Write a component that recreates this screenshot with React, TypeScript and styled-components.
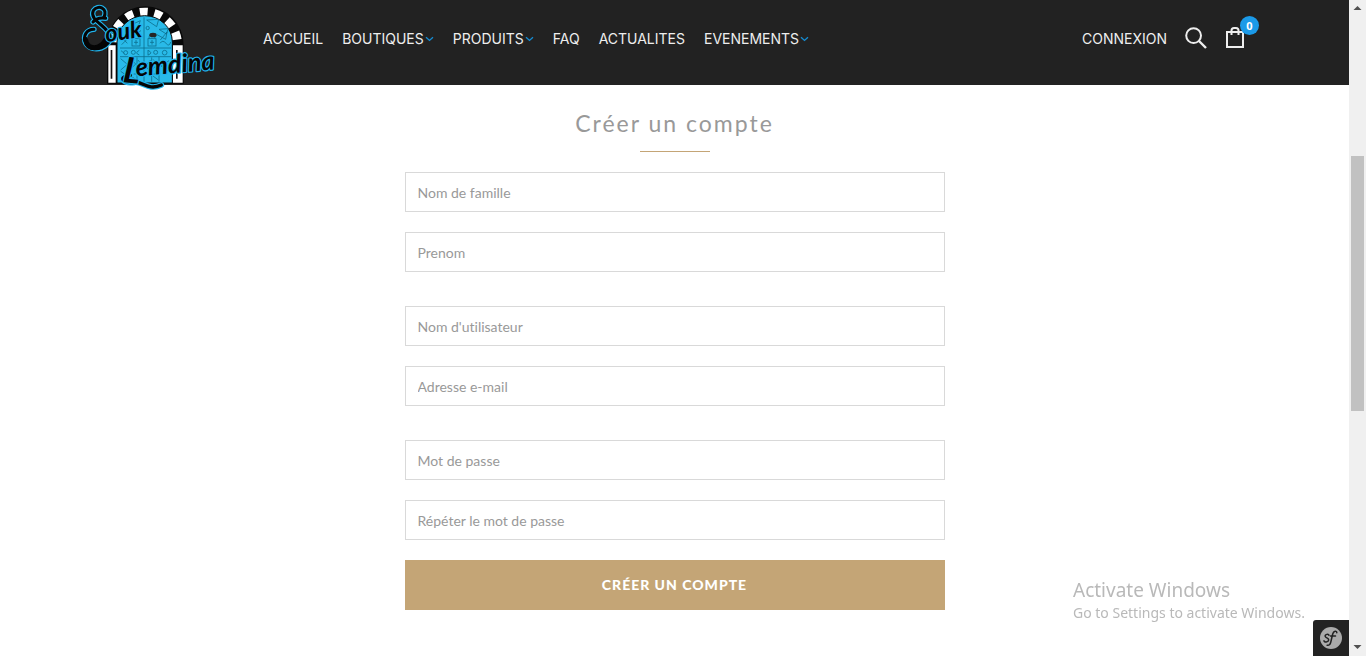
import React from 'react';
import styled, { createGlobalStyle } from 'styled-components';

const GlobalStyle = createGlobalStyle`
  *, *::before, *::after { box-sizing: border-box; }
  body { margin: 0; background: #fff; font-family: Lato, sans-serif; }
`;

const Page = styled.div`
  display: grid;
  grid-template-columns: minmax(0, 1fr) 17px;
  min-height: 100vh;
`;

const Header = styled.header`
  display: flex;
  align-items: center;
  height: 85px;
  padding: 0 90px 0 75px;
  background: #222;
`;

const LogoLink = styled.a`
  align-self: flex-start;
  flex: none;
  width: 150px;
  height: 85px;
  margin-right: 38px;
  svg { display: block; overflow: visible; }
`;

const Nav = styled.nav`
  display: flex;
  gap: 19px;
  padding-bottom: 8px;
`;

const NavLink = styled.a`
  display: flex;
  align-items: center;
  gap: 1px;
  color: #eee;
  font: 14px/20px Inter, sans-serif;
  text-decoration: none;
  white-space: nowrap;
`;

const Tools = styled.div`
  display: flex;
  align-items: flex-end;
  gap: 18px;
  margin-left: auto;
  padding-bottom: 10px;
`;

const IconButton = styled.button`
  position: relative;
  display: block;
  padding: 0;
  border: 0;
  background: none;
  color: #eee;
  svg { display: block; }
`;

const CartButton = styled(IconButton)`
  padding-right: 15px;
`;

const Badge = styled.span`
  position: absolute;
  top: -11px;
  right: 0;
  width: 19px;
  height: 19px;
  border-radius: 50%;
  background: #1b9ae8;
  color: #fff;
  font: 700 11px/19px "Open Sans", sans-serif;
  text-align: center;
`;

const Main = styled.main`
  display: flex;
  flex-direction: column;
  align-items: center;
  padding: 24px 20px 46px;
`;

const Title = styled.h1`
  display: flex;
  flex-direction: column;
  align-items: center;
  gap: 14px;
  margin: 0 0 20px;
  color: #999;
  font-size: 23px;
  font-weight: 400;
  line-height: 28px;
  letter-spacing: 2px;
  &::after {
    content: '';
    width: 70px;
    height: 1px;
    background: #c4a576;
  }
`;

const Form = styled.form`
  display: flex;
  flex-direction: column;
  gap: 34px;
  width: 100%;
  max-width: 540px;
`;

const Group = styled.div`
  display: flex;
  flex-direction: column;
  gap: 20px;
`;

const Field = styled.input`
  width: 100%;
  height: 40px;
  padding: 0 12px;
  border: 1px solid #d9d9d9;
  border-radius: 0;
  background: #fff;
  color: #555;
  font: 14px/20px Lato, sans-serif;
  font-variant-ligatures: none;
  &::placeholder { color: #999; opacity: 1; }
`;

const Submit = styled.button`
  height: 50px;
  padding: 0;
  border: 0;
  background: #c4a576;
  color: #fff;
  font: 900 14px/20px Lato, sans-serif;
  letter-spacing: 1px;
  text-transform: uppercase;
`;

const Watermark = styled.aside`
  position: fixed;
  right: 57px;
  bottom: 33px;
  width: 236px;
  color: #b9b9b9;
  font: 14px/20px "Noto Sans", sans-serif;
  white-space: nowrap;
  strong {
    display: block;
    font-size: 19px;
    font-weight: 400;
    line-height: 26px;
  }
`;

const DebugButton = styled.button`
  position: fixed;
  right: 17px;
  bottom: 0;
  width: 36px;
  height: 36px;
  padding: 7px;
  border: 0;
  border-radius: 3px 0 0 0;
  background: #222;
  svg { display: block; }
`;

const ScrollTrack = styled.div`
  position: sticky;
  top: 0;
  display: grid;
  grid-template-rows: 17px 139fr 255fr 228fr 17px;
  justify-items: center;
  height: 100vh;
  background: #f0f0f0;
`;

const ScrollThumb = styled.div`
  grid-row: 3;
  width: 13px;
  background: #c1c1c1;
`;

const ScrollArrow = styled.svg<{ $row: number }>`
  grid-row: ${(p) => p.$row};
  fill: #505050;
`;

const Chevron = () => (
  <svg width="9" height="6" viewBox="0 0 9 6" fill="none" stroke="#168bd0" strokeWidth="1.4" aria-hidden="true">
    <path d="M1 1.2 4.5 4.4 8 1.2" />
  </svg>
);

const Ornament = () => (
  <g fill="none" stroke="#0b6d8c" strokeWidth="2.4">
    <rect x="171" y="116" width="24" height="22" />
    <rect x="219" y="116" width="24" height="22" />
    <path d="M207 52V248M135 144H288M135 170H288M164 170V245M252 170V245M186 172V245M230 172V245" />
    <path d="m137 176 20 17-20 17M137 214l20 14-20 14M189 180l14 18-14 18M227 180l-16 18 16 18M282 182l-24 16 24 16M168 228l16 12M234 228l16 12" />
    <path d="m215 60 30 20 6-22zM252 88l22 14 6-16zM196 62l-22 10-10 22 24-10zM176 104l22-12M246 104l26 14 4-22-20 24M142 114l15 16M140 134l18-18" />
    <path d="M183 120v14M177 127h12M231 120v14M225 127h12M193 151q-16 8 0 14M219 151q17 8 0 14M219 150v16M168 178l14 14-14 14M234 178l14 14-14 14" />
    <path d="M174 116q0-14 9-14t9 14M222 116q0-14 9-14t9 14M255 130q8-12 18 0t14-4M138 152l10 8M176 222h8M236 222h8" />
    <circle cx="152" cy="158" r="6" />
    <circle cx="269" cy="158" r="7" />
    <circle cx="175" cy="157" r="6" />
    <circle cx="242" cy="157" r="6" />
    <circle cx="218" cy="84" r="5" />
  </g>
);

const swash =
  'M86 54C102 24 68 12 55 32c-14 28 42 46 50 75 6 34-50 56-72 24-12-23 2-43 24-43M54 66q12-15 38-11';
const underline = 'M166 226q-26 3-22 13 8 12 35 8c25-3 41 26 80 8';

const Logo = () => (
  <svg width="150" height="95" viewBox="0 0 450 285" role="img" aria-label="Souk Lemdina">
    <path d="M96 251V134a114 114 0 0 1 230 0V251Z" fill="#080808" />
    <path d="M113 134a97 97 0 0 1 194 0" fill="none" stroke="#fff" strokeWidth="28" strokeDasharray="23 20" strokeDashoffset="-8" />
    <path d="M100 136h22v112h-22zM294 136h29v112h-29z" fill="#fff" />
    <path d="M107 150h5v86h-5zM303 150h5v86h-5z" fill="#111" />
    <path d="M126 249V126a83 79 0 0 1 166 0V249Z" fill="#29bae8" stroke="#080808" strokeWidth="3" />
    <Ornament />
    <ellipse cx="234" cy="105" rx="11" ry="7" fill="#252525" />
    <g fill="none" strokeLinecap="round" strokeLinejoin="round">
      <path d={swash} stroke="#20b4ed" strokeWidth="16" />
      <path d={underline} stroke="#20b4ed" strokeWidth="17" />
      <path d={swash} stroke="#050505" strokeWidth="9" />
      <path d="M31 118c8 36 44 30 60 4" stroke="#050505" strokeWidth="15" />
      <path d={underline} stroke="#050505" strokeWidth="10" />
    </g>
    <g
      fill="#050505"
      stroke="#20b4ed"
      strokeWidth="7"
      strokeLinejoin="round"
      paintOrder="stroke"
      fontFamily="Lato, sans-serif"
      fontStyle="italic"
      fontWeight="700"
    >
      <text x="94" y="126" fontSize="70" transform="rotate(-8 94 126)">ouk</text>
      <text x="142" y="246" fontSize="106" transform="rotate(6 142 246)">L</text>
      <text x="184" y="229" fontSize="76" transform="rotate(-5 184 229)">emdina</text>
    </g>
  </svg>
);

const navItems = [
  { label: 'ACCUEIL' },
  { label: 'BOUTIQUES', menu: true },
  { label: 'PRODUITS', menu: true },
  { label: 'FAQ' },
  { label: 'ACTUALITES' },
  { label: 'EVENEMENTS', menu: true },
];

const fieldGroups = [
  [
    { label: 'Nom de famille', type: 'text' },
    { label: 'Prenom', type: 'text' },
  ],
  [
    { label: "Nom d'utilisateur", type: 'text' },
    { label: 'Adresse e-mail', type: 'email' },
  ],
  [
    { label: 'Mot de passe', type: 'password' },
    { label: 'Répéter le mot de passe', type: 'password' },
  ],
];

export default function App() {
  return (
    <>
      <GlobalStyle />
      <Page>
        <div>
          <Header>
            <LogoLink href="#"><Logo /></LogoLink>
            <Nav>
              {navItems.map((item) => (
                <NavLink href="#" key={item.label}>
                  {item.label}
                  {item.menu && <Chevron />}
                </NavLink>
              ))}
            </Nav>
            <Tools>
              <NavLink href="#">CONNEXION</NavLink>
              <IconButton type="button" aria-label="Rechercher">
                <svg width="22" height="22" viewBox="0 0 22 22" fill="none" stroke="currentColor" strokeWidth="2">
                  <circle cx="8.6" cy="8.6" r="7.4" />
                  <path d="m14 14 7 7" strokeWidth="2.4" />
                </svg>
              </IconButton>
              <CartButton type="button" aria-label="Panier">
                <svg width="19" height="22" viewBox="0 0 19 22" fill="none" stroke="currentColor" strokeWidth="2">
                  <path d="M2 5h16v15H2zM6.500 8V3.500Q6.500 1 9 1h2q2.500 0 2.500 2.500V8" />
                </svg>
                <Badge>0</Badge>
              </CartButton>
            </Tools>
          </Header>
          <Main>
            <Title>Créer un compte</Title>
            <Form>
              {fieldGroups.map((group, index) => (
                <Group key={group[0].label}>
                  {group.map((field) => (
                    <Field key={field.label} type={field.type} placeholder={field.label} aria-label={field.label} />
                  ))}
                  {index === fieldGroups.length - 1 && <Submit type="submit">Créer un compte</Submit>}
                </Group>
              ))}
            </Form>
          </Main>
        </div>
        <ScrollTrack aria-hidden="true">
          <ScrollArrow $row={1} width="17" height="17" viewBox="0 0 17 17"><path d="m8.500 6 4 4h-8z" /></ScrollArrow>
          <ScrollThumb />
          <ScrollArrow $row={5} width="17" height="17" viewBox="0 0 17 17"><path d="m8.500 10-4-4h8z" /></ScrollArrow>
        </ScrollTrack>
      </Page>
      <Watermark>
        <strong>Activate Windows</strong>
        Go to Settings to activate Windows.
      </Watermark>
      <DebugButton type="button" aria-label="Symfony">
        <svg width="22" height="22" viewBox="0 0 22 22">
          <circle cx="11" cy="11" r="11" fill="#aaa" />
          <g fill="none" stroke="#222" strokeLinecap="round">
            <path d="M9 8.200C8.500 6.500 4.800 7.300 5.200 9.300c.3 1.700 3.700 1.600 3.500 3.700-.2 2.300-4.700 2.600-4.700.8" strokeWidth="1.500" />
            <path d="M16.800 5.800c.2-2.500-3.300-1.800-4.100 1.200L10.800 15c-.6 2.600-2 3.800-3.700 3.200M10.500 9h5" strokeWidth="1.500" />
          </g>
        </svg>
      </DebugButton>
    </>
  );
}
